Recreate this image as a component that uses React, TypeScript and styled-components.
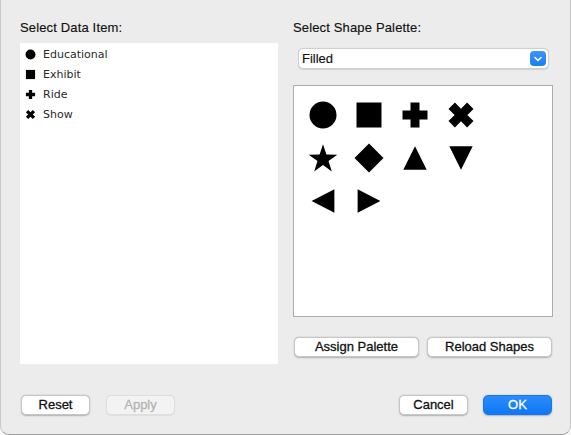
import React from "react";
import styled, { createGlobalStyle } from "styled-components";

const Global = createGlobalStyle`
  html, body { margin: 0; padding: 0; background: #f6f6f6; }
  * { box-sizing: border-box; }
`;

const Window = styled.div`
  width: 571px;
  height: 435px;
  background: #ececec;
  border-radius: 0 0 9px 9px;
  border: 1px solid #c9c9c9;
  border-top: none;
  border-bottom-color: #9d9d9d;
  display: flex;
  flex-direction: column;
  padding: 20px 18px 0 19px;
  font-family: "Liberation Sans", Arial, sans-serif;
  color: #111;
`;

const Main = styled.div`
  display: grid;
  grid-template-columns: 258px 260px;
  column-gap: 15px;
`;

const Column = styled.div`
  display: flex;
  flex-direction: column;
`;

const Label = styled.div`
  font-size: 13px;
  line-height: 16px;
  height: 16px;
  letter-spacing: 0.15px;
  -webkit-text-stroke: 0.15px #111;
`;

const List = styled.div`
  margin-top: 7px;
  height: 321px;
  background: #fff;
  padding: 1px 0 0 5px;
  display: flex;
  flex-direction: column;
`;

const Item = styled.div`
  display: flex;
  align-items: center;
  height: 20px;
  font-family: "DejaVu Sans", sans-serif;
  font-size: 11px;
  color: #2a2a2a;
  gap: 7px;
`;

const Select = styled.div`
  margin: 12px 0 0 5px;
  width: 251px;
  height: 21px;
  background: #fff;
  border-radius: 5px;
  border: 1px solid #cfcfcf;
  box-shadow: 0 0.5px 1px rgba(0, 0, 0, 0.12);
  display: flex;
  align-items: center;
  justify-content: space-between;
  padding: 0 2px 0 3px;
  font-size: 13px;
  -webkit-text-stroke: 0.15px #111;
`;

const Stepper = styled.div`
  width: 16px;
  height: 15px;
  border-radius: 4px;
  background: linear-gradient(#3b95fd, #1a7ef8);
  display: flex;
  align-items: center;
  justify-content: center;
`;

const Palette = styled.div`
  margin-top: 16px;
  height: 232px;
  width: 260px;
  background: #fff;
  border: 1px solid #acacac;
  padding: 7px 0 0 6px;
  display: grid;
  grid-template-columns: repeat(4, 46px);
  grid-auto-rows: 43px;
  align-content: start;
`;

const Cell = styled.div`
  display: flex;
  align-items: center;
  justify-content: center;
`;

const ButtonRow = styled.div<{ $gap: number }>`
  display: flex;
  gap: ${(p) => p.$gap}px;
`;

const PaletteButtons = styled(ButtonRow)`
  margin-top: 20px;
  padding-left: 1px;
`;

const Footer = styled.div`
  margin-top: 31px;
  display: flex;
  justify-content: space-between;
  padding-left: 1px;
`;

const Button = styled.button<{ $w: number; $variant?: "primary" | "disabled" }>`
  width: ${(p) => p.$w}px;
  height: 20px;
  border-radius: 5px;
  font-family: "Liberation Sans", Arial, sans-serif;
  font-size: 13px;
  padding: 0;
  line-height: 18px;
  border: 0.5px solid ${(p) => (p.$variant === "primary" ? "#1777f0" : p.$variant === "disabled" ? "#dedede" : "#c6c6c6")};
  background: ${(p) =>
    p.$variant === "primary" ? "linear-gradient(#2a8bfc, #0f77f6)" : p.$variant === "disabled" ? "#f3f3f3" : "#fff"};
  color: ${(p) => (p.$variant === "primary" ? "#fff" : p.$variant === "disabled" ? "#b3b3b3" : "#111")};
  -webkit-text-stroke: 0.3px ${(p) => (p.$variant === "primary" ? "#fff" : p.$variant === "disabled" ? "#b3b3b3" : "#111")};
  box-shadow: ${(p) => (p.$variant === "disabled" ? "0 0.5px 1px rgba(0,0,0,0.06)" : "0 0.5px 1.5px rgba(0,0,0,0.25)")};
`;

type ShapeName =
  | "circle"
  | "square"
  | "plus"
  | "cross"
  | "star"
  | "diamond"
  | "up"
  | "down"
  | "left"
  | "right";

const starPoints = (() => {
  const cx = 15, cy = 16.3, R = 15, r = 5.8;
  const pts: string[] = [];
  for (let i = 0; i < 10; i++) {
    const ang = -Math.PI / 2 + (i * Math.PI) / 5;
    const rad = i % 2 === 0 ? R : r;
    pts.push(`${(cx + rad * Math.cos(ang)).toFixed(2)},${(cy + rad * Math.sin(ang)).toFixed(2)}`);
  }
  return pts.join(" ");
})();

const Shape: React.FC<{ name: ShapeName; size: number }> = ({ name, size }) => {
  let el: React.ReactNode = null;
  switch (name) {
    case "circle":
      el = <circle cx="15" cy="15" r="13.5" />;
      break;
    case "square":
      el = <rect x="2.5" y="2.5" width="25" height="25" />;
      break;
    case "plus":
      el = <polygon points="10.5,2.5 19.5,2.5 19.5,10.5 27.5,10.5 27.5,19.5 19.5,19.5 19.5,27.5 10.5,27.5 10.5,19.5 2.5,19.5 2.5,10.5 10.5,10.5" />;
      break;
    case "cross":
      el = (
        <polygon points="2.5,8.9 8.9,2.5 15,8.64 21.1,2.5 27.5,8.9 21.36,15 27.5,21.1 21.1,27.5 15,21.36 8.9,27.5 2.5,21.1 8.64,15" />
      );
      break;
    case "star":
      el = <polygon points={starPoints} />;
      break;
    case "diamond":
      el = <polygon points="15,0.5 29.5,15 15,29.5 0.5,15" />;
      break;
    case "up":
      el = <polygon points="15,3.2 26.7,26.8 3.3,26.8" />;
      break;
    case "down":
      el = <polygon points="3.3,3.2 26.7,3.2 15,26.8" />;
      break;
    case "left":
      el = <polygon points="3.6,15 26.4,3.3 26.4,26.7" />;
      break;
    case "right":
      el = <polygon points="3.6,3.3 26.4,15 3.6,26.7" />;
      break;
  }
  return (
    <svg width={size} height={size} viewBox="0 0 30 30" fill="#000">
      {el}
    </svg>
  );
};

const items: { name: ShapeName; label: string }[] = [
  { name: "circle", label: "Educational" },
  { name: "square", label: "Exhibit" },
  { name: "plus", label: "Ride" },
  { name: "cross", label: "Show" },
];

const palette: ShapeName[] = ["circle", "square", "plus", "cross", "star", "diamond", "up", "down", "left", "right"];

export default function App() {
  return (
    <>
      <Global />
      <Window>
        <Main>
          <Column>
            <Label>Select Data Item:</Label>
            <List>
              {items.map((it) => (
                <Item key={it.label}>
                  <Shape name={it.name} size={11} />
                  <span>{it.label}</span>
                </Item>
              ))}
            </List>
          </Column>
          <Column>
            <Label>Select Shape Palette:</Label>
            <Select>
              <span>Filled</span>
              <Stepper>
                <svg width="8" height="6" viewBox="0 0 8 6">
                  <polyline points="1,1.5 4,4.5 7,1.5" fill="none" stroke="#fff" strokeWidth="1.5" strokeLinecap="round" strokeLinejoin="round" />
                </svg>
              </Stepper>
            </Select>
            <Palette>
              {palette.map((s, i) => (
                <Cell key={i}>
                  <Shape name={s} size={30} />
                </Cell>
              ))}
            </Palette>
            <PaletteButtons $gap={8}>
              <Button $w={125}>Assign Palette</Button>
              <Button $w={125}>Reload Shapes</Button>
            </PaletteButtons>
          </Column>
        </Main>
        <Footer>
          <ButtonRow $gap={16}>
            <Button $w={69}>Reset</Button>
            <Button $w={69} $variant="disabled">Apply</Button>
          </ButtonRow>
          <ButtonRow $gap={15}>
            <Button $w={69}>Cancel</Button>
            <Button $w={69} $variant="primary">OK</Button>
          </ButtonRow>
        </Footer>
      </Window>
    </>
  );
}
